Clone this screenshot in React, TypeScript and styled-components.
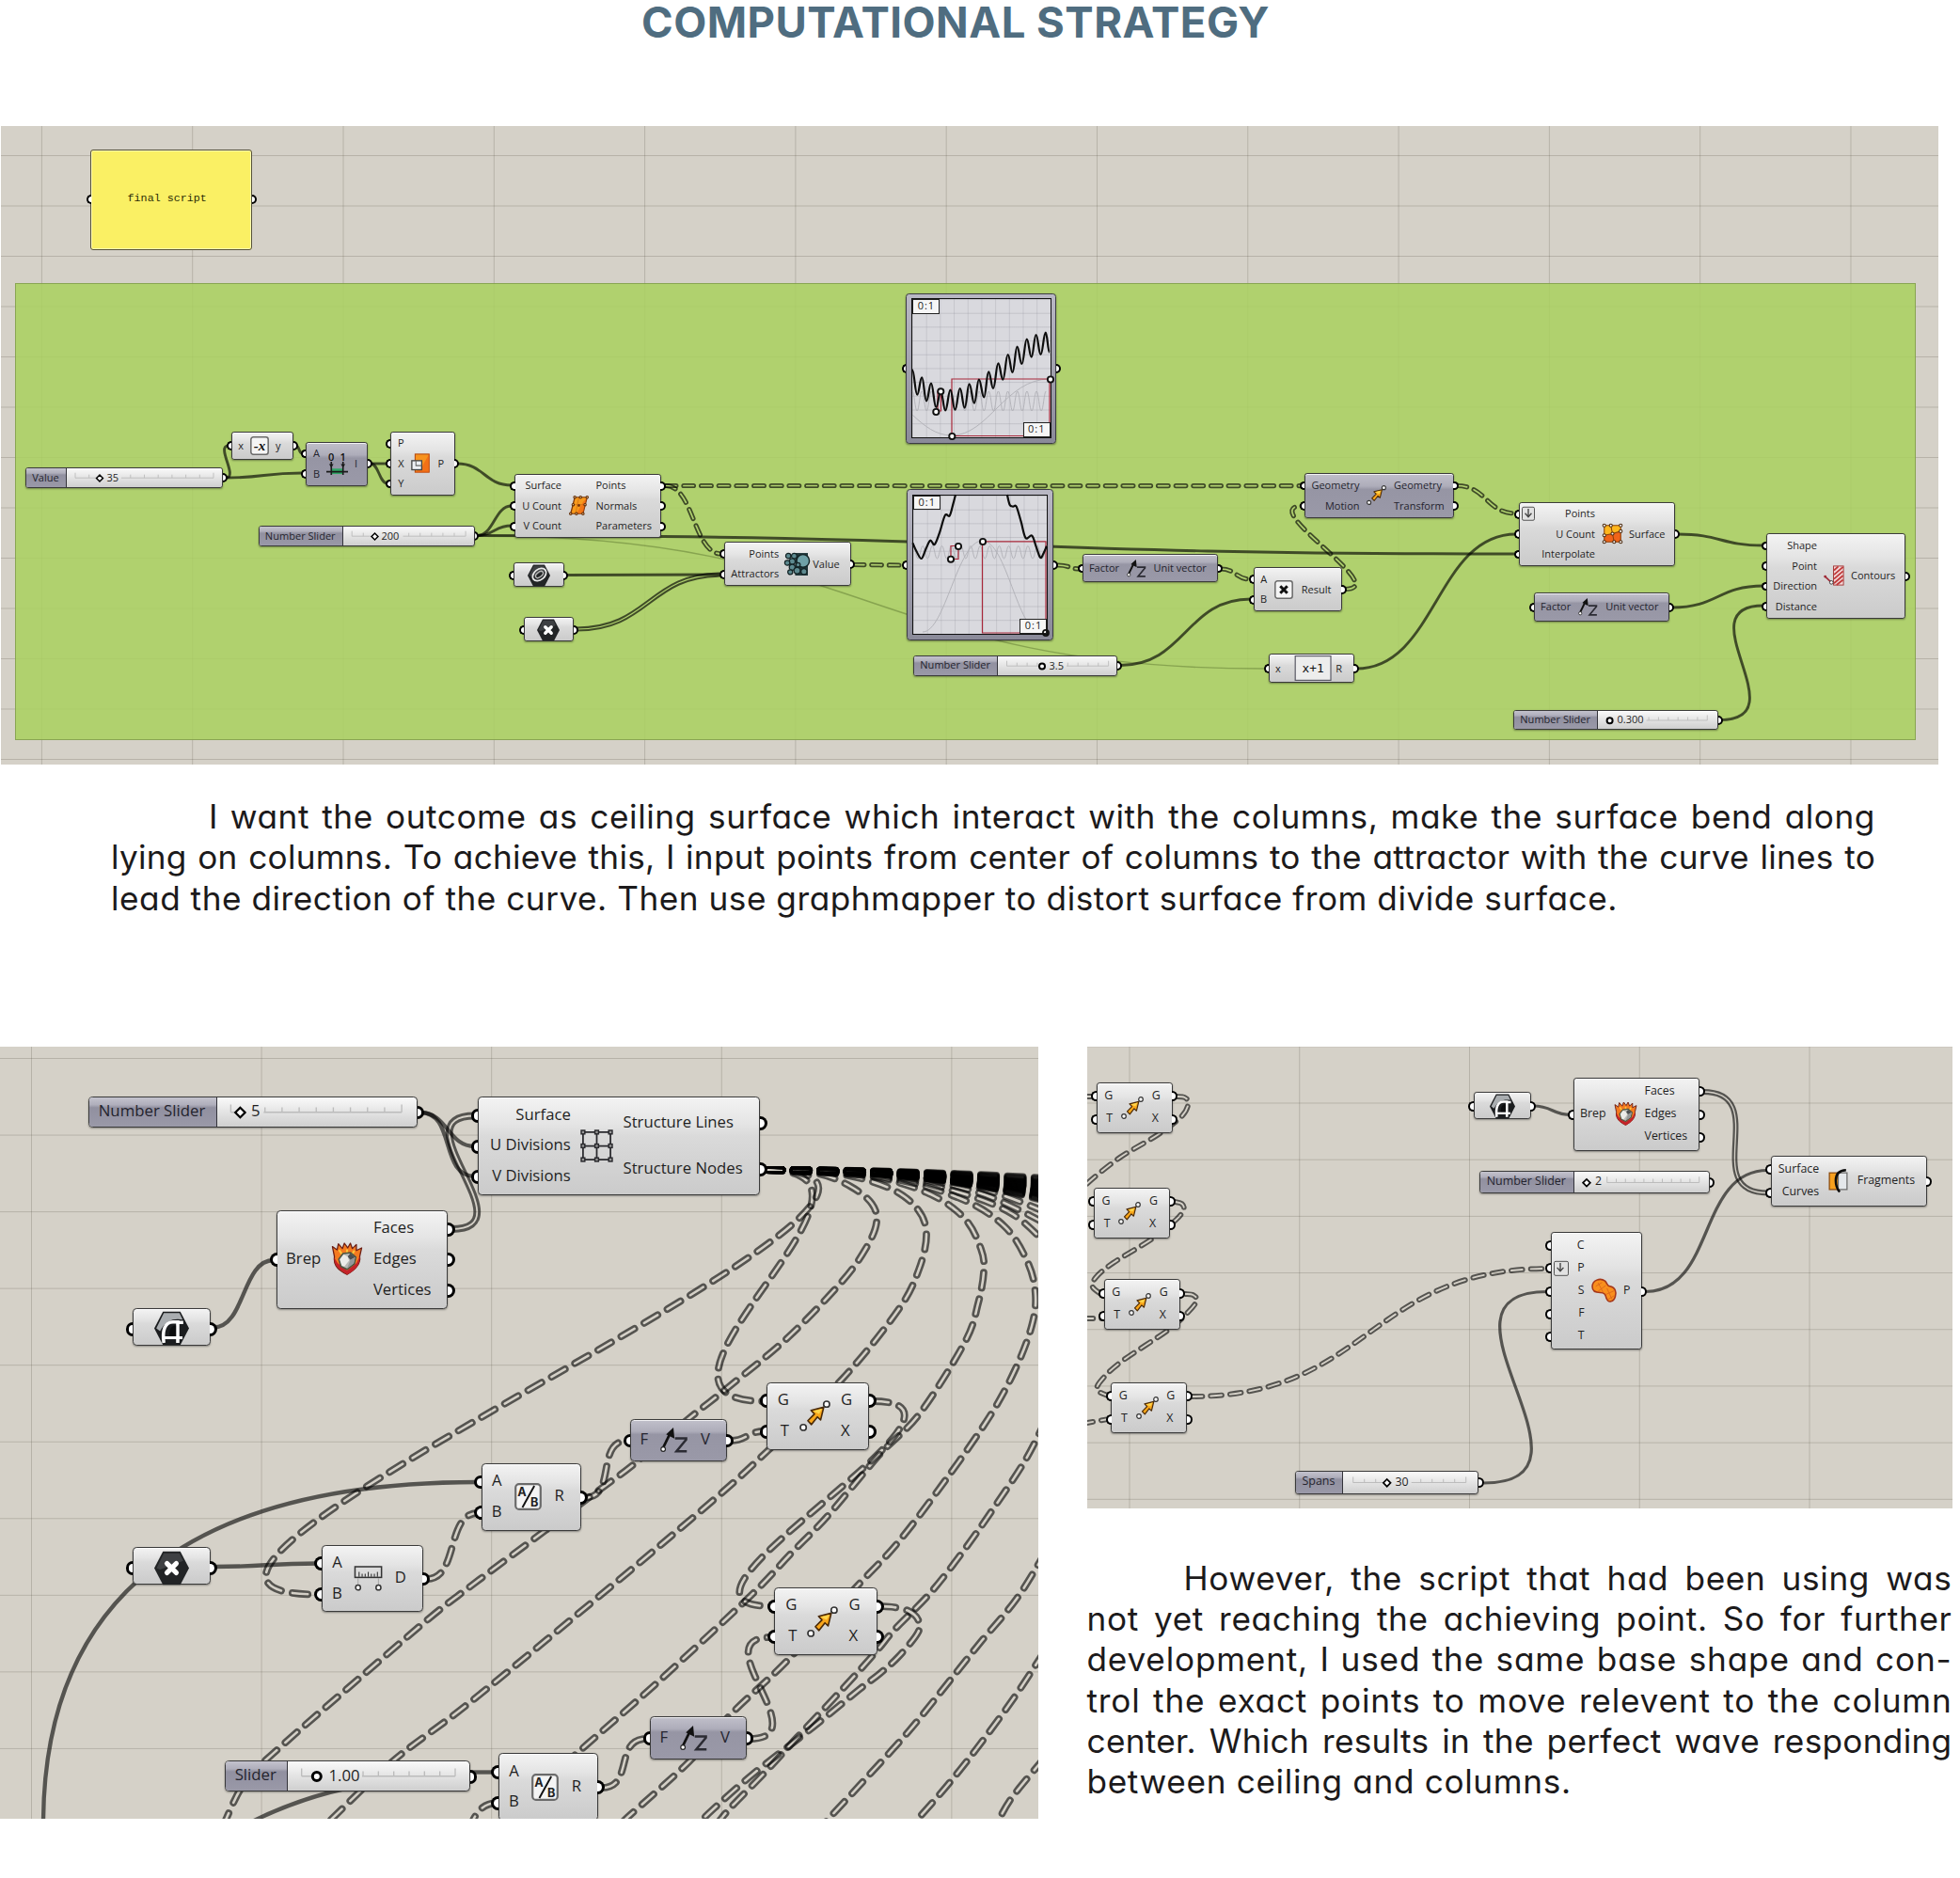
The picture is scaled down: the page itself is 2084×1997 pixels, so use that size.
import React from 'react';
import styled, { createGlobalStyle, ThemeProvider, css } from 'styled-components';

const UI = `'Open Sans', 'Noto Sans', sans-serif`;
const COPY = `Inter, 'Liberation Sans', sans-serif`;
const MONO = `'Liberation Mono', 'DejaVu Sans Mono', monospace`;

interface BoardTheme {
  s: number;
  x: number;
  y: number;
  w: number;
  h: number;
}

const Global = createGlobalStyle`
  *, *::before, *::after { box-sizing: border-box; }
  body { margin: 0; background: #fff; font-family: ${COPY}; }
`;

/* ---------- page ---------- */

const Page = styled.main`
  width: 2084px;
  height: 1997px;
  display: flex;
  flex-direction: column;
  background: #fff;
`;

const Title = styled.h1`
  margin: 0;
  height: 134px;
  padding-left: 682px;
  white-space: nowrap;
  font: 700 45.5px/48px ${COPY};
  letter-spacing: 0.47px;
  color: #4f6d80;
`;

const Copy = styled.div<{ $top: number; $left: number; $width: number }>`
  width: ${(p) => p.$width}px;
  margin: ${(p) => p.$top}px 0 0 ${(p) => p.$left}px;
  display: flex;
  flex-direction: column;
`;

const Line = styled.p<{ $indent?: number; $track?: number; $last?: boolean }>`
  margin: 0;
  padding-left: ${(p) => p.$indent ?? 0}px;
  height: 43.25px;
  font: 400 35.2px/43.25px ${COPY};
  font-feature-settings: 'cv11' 1;
  letter-spacing: ${(p) => p.$track ?? 0.5}px;
  text-align-last: ${(p) => (p.$last ? 'left' : 'justify')};
  color: #1c1a1b;
`;

const Plain = styled.span`
  font-feature-settings: normal;
  letter-spacing: 0;
`;

const Lower = styled.section`
  margin-top: 136px;
  display: flex;
  gap: 51.5px;
`;

const Side = styled.div`
  display: flex;
  flex-direction: column;
`;

/* ---------- board ---------- */

const BoardBox = styled.div<{ $vx: number; $vp: number; $hy: number; $hp: number }>`
  position: relative;
  flex: none;
  overflow: hidden;
  isolation: isolate;
  width: ${({ theme }) => (theme as BoardTheme).w}px;
  height: ${({ theme }) => (theme as BoardTheme).h}px;
  font-family: ${UI};
  background-color: #d5d1c8;
  background-image: linear-gradient(90deg, rgba(60, 55, 40, 0.2) 1.3px, transparent 1.3px),
    linear-gradient(180deg, rgba(60, 55, 40, 0.2) 1.3px, transparent 1.3px);
  background-size: ${(p) => p.$vp}px 100%, 100% ${(p) => p.$hp}px;
  background-position: ${(p) => p.$vx}px 0, 0 ${(p) => p.$hy}px;
`;

const Layer = styled.svg`
  position: absolute;
  inset: 0;
  width: 100%;
  height: 100%;
`;

const t = (p: { theme: unknown }) => p.theme as BoardTheme;

const placed = css<{ $x: number; $y: number; $w: number; $h: number }>`
  position: absolute;
  left: ${(p) => p.$x - t(p).x}px;
  top: ${(p) => p.$y - t(p).y}px;
  width: ${(p) => p.$w}px;
  height: ${(p) => p.$h}px;
`;

const Group = styled.div<{ $x: number; $y: number; $w: number; $h: number }>`
  ${placed}
  background: rgba(170, 208, 95, 0.86);
  border: 1.5px solid rgba(90, 110, 50, 0.45);
`;

const shell = css`
  border: ${(p) => Math.max(1.2, 1.15 * t(p).s)}px solid #3a3a3a;
  border-radius: ${(p) => 2.8 * t(p).s}px;
  box-shadow: 0 1px 2px rgba(0, 0, 0, 0.35), inset 0 1px 0 rgba(255, 255, 255, 0.8);
`;

const NodeBox = styled.div<{
  $x: number; $y: number; $w: number; $h: number; $dark?: boolean; $in: number; $mid: number;
}>`
  ${placed}
  display: grid;
  grid-template-columns: ${(p) => p.$in}px ${(p) => p.$mid}px 1fr;
  padding: ${(p) => 2.1 * t(p).s}px 0;

  &::before {
    content: '';
    position: absolute;
    inset: 0;
    z-index: 0;
    ${shell}
    background: ${(p) =>
      p.$dark
        ? 'linear-gradient(#c0bfca 0, #aeadba 28%, #9695a4 36%, #9a99a8 100%)'
        : 'linear-gradient(#f3f3f3 0, #e4e4e4 28%, #dadada 40%, #cbcbcb 100%)'};
  }
`;

const Col = styled.div`
  display: flex;
  flex-direction: column;
`;

const Row = styled.div`
  position: relative;
  flex: 1;
  display: flex;
  align-items: center;
`;

const Label = styled.span<{ $right?: boolean; $dark?: boolean }>`
  position: relative;
  width: 100%;
  top: ${(p) => -0.7 * t(p).s}px;
  text-align: ${(p) => (p.$right ? 'right' : 'left')};
  font-size: ${(p) => 11 * t(p).s}px;
  line-height: 1;
  white-space: nowrap;
  color: ${(p) => (p.$dark ? '#24242e' : '#1f1f1f')};
`;

const Port = styled.i<{ $out?: boolean }>`
  position: absolute;
  top: calc(50% - ${(p) => 4.6 * t(p).s}px);
  ${(p) => (p.$out ? 'right' : 'left')}: ${(p) => -4.9 * t(p).s}px;
  width: ${(p) => 5.2 * t(p).s}px;
  height: ${(p) => 9.8 * t(p).s}px;
  border: ${(p) => 2 * t(p).s}px solid #000;
  background: #fff;
  ${(p) =>
    p.$out
      ? `border-left: 0; border-radius: 0 ${6 * t(p).s}px ${6 * t(p).s}px 0;`
      : `border-right: 0; border-radius: ${6 * t(p).s}px 0 0 ${6 * t(p).s}px;`}
`;

const Mid = styled.div`
  position: relative;
  display: flex;
  align-items: center;
  justify-content: center;
`;

const Art = styled.svg<{ $size: number; $w?: number }>`
  flex: none;
  width: ${(p) => p.$w ?? p.$size}px;
  height: ${(p) => p.$size}px;
  overflow: visible;
`;

const Flatten = styled.span`
  position: absolute;
  left: ${(p) => 3 * t(p).s}px;
  top: 50%;
  transform: translateY(-50%);
  display: flex;
  width: ${(p) => 14.5 * t(p).s}px;
  height: ${(p) => 14.5 * t(p).s}px;
  border: 1.2px solid #555;
  border-radius: 2px;
  background: #e2e2e2;
`;

/* ---------- icons ---------- */

type IconName =
  | 'divide' | 'pull' | 'arrow' | 'vecz' | 'times' | 'expr' | 'surf' | 'contour' | 'neg' | 'interval'
  | 'rect' | 'grid' | 'brep' | 'ratio' | 'ruler' | 'split' | 'patch' | 'hexx' | 'hexcurve' | 'hexa';

const Hex = ({ children, size }: { children: React.ReactNode; size: number }) => (
  <Art viewBox="0 0 24 24" $size={size}>
    <path d="M6 .5H18L24 12 18 23.5H6L0 12Z" fill="#222426" />
    <path d="M6.6 1.8H17.4L20 7 4 13 1.6 12Z" fill="#4a4d50" opacity=".7" />
    {children}
  </Art>
);

const Button = ({ children, size }: { children: React.ReactNode; size: number }) => (
  <Art viewBox="0 0 24 24" $size={size}>
    <rect x="1" y="1" width="22" height="22" rx="3" fill="#f4f4f4" stroke="#6a6a6a" strokeWidth="1.8" />
    {children}
  </Art>
);

const Icon = ({ name, size }: { name: IconName; size: number }) => {
  switch (name) {
    case 'divide':
      return (
        <Art viewBox="0 0 24 24" $size={size}>
          <path d="M7 2H22L17 22H2Z" fill="#f79a1c" stroke="#7a3408" strokeWidth="1.4" />
          <path d="M17 8 22 2 17 22H9Z" fill="#ee5a12" opacity=".55" />
          <path d="M12 2 8 22M5 11H20" stroke="#b8560c" strokeWidth="1.1" opacity=".5" />
          <circle cx="12" cy="12" r="1.6" fill="#7a3408" />
          <g fill="#f6c88c" stroke="#5a2a0a" strokeWidth="1.2">
            {[[7, 2], [14, 2], [22, 2], [5, 11], [19.5, 11], [2, 22], [9, 22], [17, 22]].map(([x, y]) => (
              <circle key={`${x}-${y}`} cx={x} cy={y} r="1.4" />
            ))}
          </g>
        </Art>
      );
    case 'pull':
      return (
        <Art viewBox="0 0 24 24" $size={size}>
          <rect x="11" y="1" width="13" height="23" fill="#22383b" />
          <circle cx="19" cy="9" r="6.5" fill="#6fa0a6" stroke="#142426" strokeWidth="1.4" />
          <g fill="#5d8a90" stroke="#142426" strokeWidth="1.2">
            <circle cx="10" cy="4" r="2.8" /><circle cx="4" cy="4" r="2.6" /><circle cx="8" cy="9.5" r="3" />
            <circle cx="3" cy="11" r="2.6" /><circle cx="8" cy="15.5" r="3" /><circle cx="13" cy="19" r="3.2" />
            <circle cx="20" cy="20" r="3" /><circle cx="6" cy="20.5" r="2.5" /><circle cx="14" cy="13" r="2.2" />
          </g>
        </Art>
      );
    case 'arrow':
      return (
        <Art viewBox="0 0 24 24" $size={size}>
          <path d="M6.5 15.8 11.6 10.6 9 7.8 18.8 5.4 16.4 15.2 13.9 12.9 9.3 18.8Z" fill="#f9a61a" stroke="#4a2a08" strokeWidth="1.2" strokeLinejoin="round" />
          <path d="M10.5 8.4 17.5 6.6 15.2 10.5Z" fill="#ffd54a" />
          <circle cx="3" cy="21" r="2.3" fill="#fff" stroke="#333" strokeWidth="1.2" />
          <circle cx="21" cy="3" r="2.3" fill="#fff" stroke="#333" strokeWidth="1.2" />
        </Art>
      );
    case 'vecz':
      return (
        <Art viewBox="0 0 26 24" $size={size} $w={size * 1.08}>
          <path d="M2.8 19 9.6 5" stroke="#111" strokeWidth="2.4" />
          <path d="M12.5 0 13.5 10.5 5.6 6.4Z" fill="#111" />
          <circle cx="2.8" cy="20.5" r="2.1" fill="#fff" stroke="#222" strokeWidth="1" />
          <path d="M14 10.3H24.6V11.4L15.4 22.5H25.2" fill="none" stroke="#2b2b33" strokeWidth="2.2" />
        </Art>
      );
    case 'times':
      return (
        <Button size={size}>
          <path d="M7.5 7.5 16.5 16.5M16.5 7.5 7.5 16.5" stroke="#111" strokeWidth="3.6" />
        </Button>
      );
    case 'neg':
      return (
        <Button size={size}>
          <text x="12" y="17.5" textAnchor="middle" fontFamily="Liberation Serif, serif" fontSize="18" fontWeight="700" fontStyle="italic" fill="#111">-x</text>
        </Button>
      );
    case 'ratio':
      return (
        <Button size={size}>
          <path d="M17.5 2.5 7 21.5" stroke="#111" strokeWidth="1.6" />
          <text x="6.6" y="11.5" textAnchor="middle" fontFamily="Inter, sans-serif" fontSize="10.5" fontWeight="700" fill="#222">A</text>
          <text x="17.6" y="21" textAnchor="middle" fontFamily="Inter, sans-serif" fontSize="10.5" fontWeight="700" fill="#222">B</text>
        </Button>
      );
    case 'expr':
      return (
        <Art viewBox="-5.6 0 39 27" $size={27} $w={39}>
          <rect x=".6" y=".6" width="37.8" height="25.8" fill="#ededed" stroke="#5b5b66" strokeWidth="1.2" />
          <text x="19.5" y="17.5" textAnchor="middle" fontFamily="DejaVu Sans Mono, monospace" fontSize="12.8" fill="#111">x+1</text>
        </Art>
      );
    case 'surf':
      return (
        <Art viewBox="0 0 24 24" $size={size}>
          <path d="M2 2H22V10L12 13 2 16Z" fill="#fdb71e" />
          <path d="M2 14 12 12 22 9V22H2Z" fill="#f0641a" />
          <path d="M10 2 12 12 14 22M2 14 12 12 22 9M2 2H22V22H2Z" fill="none" stroke="#8a3f0a" strokeWidth="1.2" />
          <g fill="#fff" stroke="#4a2a10" strokeWidth="1.2">
            {[[2, 2], [10, 2], [22, 2], [2, 14], [12, 12], [22, 9], [2, 22], [14, 22], [22, 22]].map(([x, y]) => (
              <circle key={`${x}-${y}`} cx={x} cy={y} r="1.8" />
            ))}
          </g>
        </Art>
      );
    case 'contour':
      return (
        <Art viewBox="0 0 24 24" $size={size}>
          <rect x="11.5" y="1" width="11.5" height="22" fill="#f3d9d9" stroke="#a03030" strokeWidth="1" />
          <path d="M12 6 17 1.5M12 11 22.5 2M12 16 22.5 7M12 21 22.5 12M15 23 22.5 17" stroke="#c03a3a" strokeWidth="2" />
          <path d="M1.5 13 9 20" stroke="#a02c38" strokeWidth="1.8" />
          <circle cx="1.8" cy="13.2" r="1.6" fill="#a02c38" />
          <circle cx="9" cy="20" r="2" fill="#fff" stroke="#333" strokeWidth="1" />
        </Art>
      );
    case 'interval':
      return (
        <Art viewBox="0 0 24 24" $size={size}>
          <text x="5.5" y="8.5" textAnchor="middle" fontFamily="Open Sans, sans-serif" fontSize="11.5" fontWeight="600" fill="#111">0</text>
          <text x="18.5" y="8.5" textAnchor="middle" fontFamily="Open Sans, sans-serif" fontSize="11.5" fontWeight="600" fill="#111">1</text>
          <rect x="5.5" y="17" width="13" height="6" fill="#2fa565" />
          <path d="M0 20.5H24M5.5 9.5V24M18.5 9.5V24" stroke="#1a1a1a" strokeWidth="1.7" />
          <path d="M3 12H8L5.5 16ZM16 12H21L18.5 16Z" fill="#1a1a1a" />
        </Art>
      );
    case 'rect':
      return (
        <Art viewBox="0 0 24 24" $size={size}>
          <rect x="5" y="1" width="17" height="22" fill="#f7931e" stroke="#b5480c" strokeWidth="1.2" />
          <path d="M22 1V23H5L14 15Z" fill="#ee5a12" opacity=".6" />
          <rect x="1" y="9" width="12" height="11" fill="#eef0f4" stroke="#444" strokeWidth="1.5" />
          <path d="M6 9V15H13" fill="none" stroke="#666" strokeWidth="1.2" />
        </Art>
      );
    case 'grid':
      return (
        <Art viewBox="0 0 24 24" $size={size}>
          <path d="M2 2H22V22H2ZM12 2V22M2 12H22" fill="none" stroke="#2a2a2e" strokeWidth="1.2" />
          <g fill="#999" stroke="#2a2a2e" strokeWidth="1">
            {[2, 12, 22].flatMap((x) => [2, 12, 22].map((y) => (
              <rect key={`${x}-${y}`} x={x - 1.3} y={y - 1.3} width="2.6" height="2.6" />
            )))}
          </g>
        </Art>
      );
    case 'brep':
      return (
        <Art viewBox="0 0 24 24" $size={size}>
          <path d="M1 2.5 4.5 5 5.5 .5 8.5 4 10 0 12.5 3.5 14.5 0 16 4 19 1 19 5.5 23 3.5 21.5 10C22.5 16 18 20 12 23.5 6 20.5 1.5 17 2.5 10Z" fill="#f47a20" stroke="#6b1d14" strokeWidth=".9" strokeLinejoin="round" />
          <path d="M2.5 11C2 17 6.5 20.5 12 23.5 18 20.5 22 16 21.5 10L19 15 12 20.5 5 15Z" fill="#c4232a" />
          <path d="M6 5 8 8M12 4.5V7M17.5 5.5 16 8" stroke="#fbc43a" strokeWidth="1.5" />
          <path d="M5.8 12 9 7.8 14.5 7 18.6 10.5 17.5 15.5 12 19.6 7.5 17.5Z" fill="#b9bab6" stroke="#4e5540" strokeWidth="1.1" strokeLinejoin="round" />
          <path d="M12.500 10 14.5 7.6 18 10.600 14.500 12.500Z" fill="#4c4f52" />
          <path d="M14.500 12.500 18 10.600 17 15 12 19Z" fill="#94979a" />
          <path d="M6.6 12.2 9.4 8.4 12.5 10 13.500 13 10 17.5 8 16.8Z" fill="#f8f8f6" opacity=".8" />
        </Art>
      );
    case 'ruler':
      return (
        <Art viewBox="0 0 26 24" $size={size} $w={size * 1.12}>
          <rect x="0" y="0" width="26" height="10.5" fill="#dcdcdc" stroke="#333" strokeWidth="1.4" />
          <path d="M4 10V5M7 10V7M10 10V7M13 10V5M16 10V7M19 10V7M22 10V5" stroke="#333" strokeWidth="1" />
          <path d="M3 11V18M23 11V18" stroke="#aaa" strokeWidth="1" />
          <circle cx="3" cy="20.5" r="2.4" fill="#fff" stroke="#333" strokeWidth="1.4" />
          <circle cx="23" cy="20.5" r="2.4" fill="#fff" stroke="#333" strokeWidth="1.4" />
        </Art>
      );
    case 'split':
      return (
        <Art viewBox="0 0 20 24" $size={size}>
          <rect x="1" y="4" width="9" height="17" fill="#f7a01e" stroke="#8a4a0c" strokeWidth="1.2" />
          <rect x="10" y="4" width="9" height="17" fill="#e4e7ea" stroke="#6a6a6a" strokeWidth="1.2" />
          <path d="M18 1.2C9 1.5 7.5 7 7.5 12S8.5 20 11.5 23.5" fill="none" stroke="#0c0c0c" strokeWidth="2.4" />
        </Art>
      );
    case 'patch':
      return (
        <Art viewBox="0 0 26 24" $size={size} $w={size * 1.08}>
          <path d="M1 8C1 1 9-1.5 14 2 16.5 4.5 16 7 19 7.5 24.5 8.5 26 13 24.5 18 23 23.5 17.5 25 15.5 20 14.5 15.5 13.5 14 9 14 4 14 1 12 1 8Z" fill="#f98f1d" stroke="#a5371a" strokeWidth="1.5" />
          <path d="M4.5 7.5 11 3.5M7 12.5 15 6.5M14.5 16 23.5 12M17 21 23.5 17M7 4 12 13.5M16 9.5 21 20.5" stroke="#d9641a" strokeWidth=".8" />
        </Art>
      );
    case 'hexx':
      return (
        <Hex size={size}>
          <path d="M8.8 8.8 15.2 15.2M15.2 8.8 8.8 15.2" stroke="#fff" strokeWidth="3.4" strokeLinecap="round" />
        </Hex>
      );
    case 'hexcurve':
      return (
        <Hex size={size}>
          <ellipse cx="12.5" cy="11" rx="8" ry="5.6" transform="rotate(-38 12.5 11)" fill="none" stroke="#e8e8e8" strokeWidth="1.8" />
          <ellipse cx="12.5" cy="11" rx="4.6" ry="2.6" transform="rotate(-38 12.5 11)" fill="none" stroke="#b8b8b8" strokeWidth="1.4" />
        </Hex>
      );
    default:
      return (
        <Art viewBox="0 0 24 24" $size={size}>
          <path d="M6 .5H18L24 12 18 23.5H6L0 12Z" fill="#1b1d1f" />
          <path d="M6.6 1.5H17.4L19.6 6C14 5 8 6 4 14L1.4 12Z" fill="#a9adb0" />
          <path d="M6.6 22C5.5 14 7 7.6 13 7.6H16.2V22M16 8H20" fill="none" stroke="#fff" strokeWidth="2.3" />
          <path d="M10.5 16C10.5 11.5 12.5 10 15 10V17.5H10.8Z" fill="#0c0d0e" />
          <path d="M7 18.5H19.5" stroke="#fff" strokeWidth="2" />
        </Art>
      );
  }
};

/* ---------- nodes ---------- */

interface NodeProps {
  at: [number, number, number, number];
  cols: [number, number];
  ins?: string[];
  outs?: string[];
  icon: IconName;
  size?: number;
  dark?: boolean;
  flatten?: number;
}

const Node = ({ at, cols, ins = [], outs = [], icon, size = 22, dark, flatten }: NodeProps) => (
  <NodeBox $x={at[0]} $y={at[1]} $w={at[2]} $h={at[3]} $in={cols[0]} $mid={cols[1]} $dark={dark}>
    <Col>
      {ins.map((label, i) => (
        <Row key={i}>
          <Port />
          {flatten === i && (
            <Flatten>
              <Art viewBox="0 0 14 14" $size={12} $w={12}>
                <path d="M7 1.5V11M3 7 7 11.5 11 7" fill="none" stroke="#444" strokeWidth="1.6" />
              </Art>
            </Flatten>
          )}
          <Label $right $dark={dark}>{label}</Label>
        </Row>
      ))}
    </Col>
    <Mid><Icon name={icon} size={size} /></Mid>
    <Col>
      {outs.map((label, i) => (
        <Row key={i}>
          <Port $out />
          <Label $dark={dark}>{label}</Label>
        </Row>
      ))}
    </Col>
  </NodeBox>
);

const SliderBox = styled.div<{ $x: number; $y: number; $w: number; $h: number }>`
  ${placed}
`;

const SliderShell = styled.div`
  position: absolute;
  inset: 0;
  overflow: hidden;
  display: flex;
  ${shell}
  background: linear-gradient(#fafafa, #e6e6e6 45%, #cfcfcf);
`;

const SliderName = styled.div<{ $w: number }>`
  flex: none;
  width: ${(p) => p.$w}px;
  display: flex;
  align-items: center;
  justify-content: center;
  border-right: 1.3px solid #33333a;
  background: linear-gradient(#c3c2cd 0, #b0afbc 25%, #9190a0 35%, #9a99a8 100%);
  font-size: ${(p) => 11.05 * t(p).s}px;
  line-height: 1;
  padding: 0 ${(p) => 1 * t(p).s}px ${(p) => 1.4 * t(p).s}px 0;
  white-space: nowrap;
  color: #24242e;
`;

const SliderTrack = styled.div<{ $pad: number }>`
  position: relative;
  flex: 1;
  display: flex;
  align-items: center;
  padding-left: ${(p) => p.$pad}px;
  padding-bottom: ${(p) => 1.2 * t(p).s}px;
  font-size: ${(p) => 11 * t(p).s}px;
  line-height: 1;
  color: #1f1f1f;
`;

const Ticks = styled.svg`
  position: absolute;
  inset: 0;
  width: 100%;
  height: 100%;
`;

const Value = styled.span`
  position: relative;
`;

interface SliderProps {
  at: [number, number, number, number];
  name: string;
  split: number;
  knob: number;
  value: string;
  text: number;
  textEnd: number;
  ticks: [number, number];
  round?: boolean;
  k?: number;
}

const Slider = ({ at, name, split, knob, value, text, textEnd, ticks, round, k = 1 }: SliderProps) => {
  const [x, y, w, h] = at;
  const m = h / 2 - 0.8;
  const r = 3 * k;
  const xs = Array.from({ length: 11 }, (_, i) => ticks[0] + ((ticks[1] - ticks[0]) * i) / 10).filter(
    (v) => v < knob - r - 1 || v > textEnd + 1,
  );
  const o = split + 1;
  return (
    <SliderBox $x={x} $y={y} $w={w} $h={h}>
      <Port $out />
      <SliderShell>
        <SliderName $w={split - x}>{name}</SliderName>
        <SliderTrack $pad={text - o}>
          <Ticks>
            <g stroke="#bcbcbc" strokeWidth={k * 0.9}>
              {ticks[0] < knob - r - 1 && <path d={`M${ticks[0] - o} ${m}H${knob - r - 1 - o}`} />}
              <path d={`M${Math.max(textEnd + 2, ticks[0]) - o} ${m}H${ticks[1] - o}`} />
              {xs.map((v, i) => <path key={i} d={`M${v - o} ${m}v${-(v === ticks[0] || v === ticks[1] ? 5.5 : 3.5) * k}`} />)}
            </g>
            {round ? (
              <circle cx={knob - o} cy={m + 0.3} r={r} fill="#fff" stroke="#000" strokeWidth={2 * k} />
            ) : (
              <path d={`M${knob - o - r * 1.15} ${m + 0.3}l${r * 1.15}-${r * 1.15} ${r * 1.15} ${r * 1.15}-${r * 1.15} ${r * 1.15}Z`} fill="#fff" stroke="#000" strokeWidth={1.5 * k} />
            )}
          </Ticks>
          <Value>{value}</Value>
        </SliderTrack>
      </SliderShell>
    </SliderBox>
  );
};

const HexNode = ({ at, icon, size }: { at: [number, number, number, number]; icon: IconName; size: number }) => (
  <Node at={at} cols={[3, at[2] - 6]} ins={['']} outs={['']} icon={icon} size={size} />
);

/* ---------- wires ---------- */

type Pt = [number, number];
type Kind = 'solid' | 'double' | 'dash' | 'faint';
interface Wire { d: string; kind: Kind }

const link = (a: Pt, b: Pt, k?: number): string => {
  const c = k ?? Math.abs(b[0] - a[0]) / 2;
  return `M${a[0]} ${a[1]}C${a[0] + c} ${a[1]} ${b[0] - c} ${b[1]} ${b[0]} ${b[1]}`;
};

const through = (pts: Pt[]): string => {
  let d = `M${pts[0][0]} ${pts[0][1]}`;
  for (let i = 0; i < pts.length - 1; i++) {
    const p0 = pts[Math.max(0, i - 1)];
    const p1 = pts[i];
    const p2 = pts[i + 1];
    const p3 = pts[Math.min(pts.length - 1, i + 2)];
    d += `C${p1[0] + (p2[0] - p0[0]) / 6} ${p1[1] + (p2[1] - p0[1]) / 6} ${p2[0] - (p3[0] - p1[0]) / 6} ${p2[1] - (p3[1] - p1[1]) / 6} ${p2[0]} ${p2[1]}`;
  }
  return d;
};

const Wires = ({ id, wires, box, s, period, tone }: {
  id: string; wires: Wire[]; box: [number, number, number, number]; s: number; period: number; tone: string;
}) => {
  const outer = 5.2 * s;
  const inner = 1.7 * s;
  const dash = `${period * 0.85 - outer} ${period * 0.15 + outer}`;
  return (
    <Layer viewBox={box.join(' ')}>
      <defs>
        {wires.map((w, i) =>
          w.kind === 'dash' || w.kind === 'double' ? (
            <mask key={i} id={`${id}${i}`} maskUnits="userSpaceOnUse" x={box[0]} y={box[1]} width={box[2]} height={box[3]}>
              <rect x={box[0]} y={box[1]} width={box[2]} height={box[3]} fill="#fff" />
              <path d={w.d} fill="none" stroke="#000" strokeWidth={w.kind === 'dash' ? inner : 1.2 * s}
                strokeLinecap={w.kind === 'dash' ? 'round' : 'butt'} strokeDasharray={w.kind === 'dash' ? dash : undefined} />
            </mask>
          ) : null,
        )}
      </defs>
      {wires.map((w, i) => (
        <path key={i} d={w.d} fill="none" stroke={w.kind === 'faint' ? 'rgba(40,60,10,.3)' : tone}
          strokeWidth={w.kind === 'solid' ? 2.9 * s : w.kind === 'faint' ? 1.4 : w.kind === 'double' ? 5.2 * s : outer}
          strokeLinecap={w.kind === 'dash' ? 'round' : 'butt'}
          strokeDasharray={w.kind === 'dash' ? dash : undefined}
          mask={w.kind === 'dash' || w.kind === 'double' ? `url(#${id}${i})` : undefined} />
      ))}
    </Layer>
  );
};

/* ---------- graph mapper ---------- */

const GraphBox = styled.div<{ $x: number; $y: number; $w: number; $h: number }>`
  ${placed}
`;

const GraphFrame = styled.div`
  position: absolute;
  inset: 0;
  padding: 4.5px 4.5px 5px 5px;
  display: flex;
  border: 1.3px solid #3c3c44;
  border-radius: 3.5px;
  background: linear-gradient(#b9b8c4, #8a8a99);
  box-shadow: 0 1px 2px rgba(0, 0, 0, 0.4);
`;

const Plot = styled.div`
  position: relative;
  flex: 1;
  border: 1.5px solid #111;
  background-color: #d9d9de;
  background-image: linear-gradient(90deg, rgba(140, 140, 150, 0.25) 1px, transparent 1px),
    linear-gradient(rgba(140, 140, 150, 0.3) 1px, transparent 1px);
  background-size: 14.7px 100%, 100% 14.7px;
`;

const Range = styled.span<{ $end?: boolean }>`
  position: absolute;
  ${(p) => (p.$end ? 'right: 0; bottom: 0;' : 'left: 0; top: 0;')}
  width: 29px;
  height: 15.5px;
  border: 1px solid #222;
  background: #f6f6f6;
  font: 11px/12px ${UI};
  text-align: center;
  letter-spacing: 1px;
  color: #222;
`;

const GraphArt = styled.svg`
  position: absolute;
  left: -1.5px;
  top: -1.5px;
  width: 148px;
  height: 148px;
  overflow: visible;
`;

const waves = (pts: Pt[]): string =>
  pts.reduce((d, p, i) => {
    if (i === 0) return `M${p[0]} ${p[1]}`;
    const q = pts[i - 1];
    const h = (p[0] - q[0]) * 0.42;
    return `${d}C${q[0] + h} ${q[1]} ${p[0] - h} ${p[1]} ${p[0]} ${p[1]}`;
  }, '');

const main1: Pt[] = (
  [[1054, 280], [1066, 360], [1077, 305], [1088, 380], [1099, 324], [1111, 400], [1122, 350], [1133, 410], [1145, 345],
  [1156, 408], [1168, 340], [1179, 402], [1190, 326], [1202, 387], [1213, 312], [1225, 368], [1236, 287], [1247, 340],
  [1259, 260], [1270, 312], [1282, 232], [1293, 289], [1304, 207], [1315, 262], [1327, 183], [1338, 240], [1349, 169],
  [1360, 232], [1372, 162], [1381, 225]] as Pt[]
).map(([x, y]) => [(x - 1052) / 2.24, (y - 52) / 3]);

const ghost = (y0: number, y1: number): Pt[] =>
  Array.from({ length: 29 }, (_, i) => [1 + i * 5.08, i % 2 ? y1 : y0]);

const conv2 = (pts: Pt[]): Pt[] => pts.map(([x, y]) => [(x - 1054) / 2.24, (y - 681) / 3]);

const left2 = through(conv2([[1055, 838], [1064, 865], [1076, 888], [1087, 855], [1097, 830], [1107, 843], [1119, 805], [1132, 750], [1143, 751], [1151, 715], [1157, 684]]));
const right2 = through(conv2([[1280, 684], [1286, 716], [1294, 722], [1302, 722], [1313, 770], [1324, 822], [1339, 815], [1349, 850], [1359, 885], [1367, 870], [1374, 848]]));

const Knobs = ({ pts }: { pts: Pt[] }) => (
  <g fill="#fff" stroke="#111" strokeWidth="1.9">
    {pts.map(([x, y]) => <circle key={`${x}-${y}`} cx={x} cy={y} r="3.1" />)}
  </g>
);

const GraphOne = () => (
  <GraphBox $x={963.4} $y={311.7} $w={159.8} $h={160}>
    <Port /><Port $out />
    <GraphFrame>
      <Plot>
        <GraphArt viewBox="0 0 148 148">
          <path d={waves(ghost(99, 120))} fill="none" stroke="#b4b4ba" strokeWidth="1" />
          <path d="M1 124C14 136 26 146 43 146 82 146 100 86 147 86" fill="none" stroke="#b4b4ba" strokeWidth="1" />
          <path d="M43 146V86H147V146.5H43M28 99V120H31.5V99Z" fill="none" stroke="#a8283a" strokeWidth="1.2" />
          <path d={waves(main1)} fill="none" stroke="#0d0d0d" strokeWidth="2.2" />
        </GraphArt>
        <Range>0:1</Range>
        <Range $end>0:1</Range>
        <GraphArt viewBox="0 0 148 148">
          <Knobs pts={[[31.3, 99.3], [26.3, 121], [43.3, 147], [148, 86.5]]} />
        </GraphArt>
      </Plot>
    </GraphFrame>
  </GraphBox>
);

const GraphTwo = () => (
  <GraphBox $x={964.3} $y={520.3} $w={155.7} $h={160.7}>
    <Port /><Port $out />
    <GraphFrame>
      <Plot>
        <GraphArt viewBox="0 0 148 148">
          <path d={waves(ghost(55.5, 69))} fill="none" stroke="#b4b4ba" strokeWidth="1" />
          <path d="M11 147C35 147 48 50 74.5 50 100 50 112 147 136 147" fill="none" stroke="#b4b4ba" strokeWidth="1" />
          <path d="M74.5 50.8H142V148H74.5ZM41 55.5V69.5H49V55.5Z" fill="none" stroke="#a8283a" strokeWidth="1.2" />
          <path d={left2} fill="none" stroke="#0d0d0d" strokeWidth="2.2" />
          <path d={right2} fill="none" stroke="#0d0d0d" strokeWidth="2.2" />
        </GraphArt>
        <Range>0:1</Range>
        <Range $end>0:1</Range>
        <GraphArt viewBox="0 0 148 148">
          <Knobs pts={[[75, 51], [49, 56], [41, 69.7]]} />
          <circle cx="142" cy="148" r="3.1" fill="none" stroke="#111" strokeWidth="1.7" />
        </GraphArt>
      </Plot>
    </GraphFrame>
  </GraphBox>
);

const Panel = styled.div<{ $x: number; $y: number; $w: number; $h: number }>`
  ${placed}
  display: flex;
  align-items: center;
  justify-content: center;
  padding: 0 9px 0 0;

  &::before {
    content: '';
    position: absolute;
    inset: 0;
    border: 1.5px solid #57533a;
    border-radius: 3px;
    background: #faf064;
    box-shadow: inset 0 0 0 1px #fffab0;
  }
`;

const PanelText = styled.span`
  position: relative;
  font: 11.7px/1 ${MONO};
  color: #2c2c04;
`;

/* ---------- boards ---------- */

const top: BoardTheme = { s: 1, x: 1, y: 134, w: 2060, h: 679 };
const left: BoardTheme = { s: 1.52, x: 0, y: 1113, w: 1104, h: 821 };
const right: BoardTheme = { s: 1.127, x: 1155.5, y: 1113, w: 920.5, h: 491 };

const boxOf = (b: BoardTheme): [number, number, number, number] => [b.x, b.y, b.w, b.h];

const topWires: Wire[] = [
  { kind: 'faint', d: link([507, 569.5], [1344, 711]) },
  { kind: 'solid', d: link([240, 508], [243, 474], 14) },
  { kind: 'solid', d: link([240, 508], [321, 503]) },
  { kind: 'solid', d: link([315, 474], [321, 482]) },
  { kind: 'solid', d: link([394, 493], [412, 493]) },
  { kind: 'solid', d: link([394, 493], [412, 514], 9) },
  { kind: 'solid', d: link([486, 493], [544, 516]) },
  { kind: 'solid', d: link([507, 569.5], [544, 538]) },
  { kind: 'solid', d: link([507, 569.5], [544, 559]) },
  { kind: 'solid', d: link([507, 569.5], [1612, 589]) },
  { kind: 'dash', d: link([708, 516.5], [1385, 516.6]) },
  { kind: 'dash', d: link([708, 516.5], [767, 589]) },
  { kind: 'solid', d: link([602, 611.5], [767, 611]) },
  { kind: 'double', d: link([613, 669], [767, 611]) },
  { kind: 'dash', d: link([908, 600.5], [962, 601]) },
  { kind: 'dash', d: link([1125, 601], [1149, 605]) },
  { kind: 'dash', d: link([1298, 605], [1330, 616]) },
  { kind: 'dash', d: link([1430, 626.5], [1385, 538], 52) },
  { kind: 'solid', d: link([1191, 707.5], [1330, 637]) },
  { kind: 'solid', d: link([1442, 711], [1612, 568]) },
  { kind: 'dash', d: link([1549, 516.5], [1612, 546]) },
  { kind: 'solid', d: link([1784, 568], [1875, 580]) },
  { kind: 'solid', d: link([1778, 646], [1875, 623]) },
  { kind: 'solid', d: link([1829, 765.5], [1875, 644], 85) },
];

const N: Pt = [815, 1244];

const fan: Wire[] = Array.from({ length: 20 }, (_, i) => ({
  kind: 'dash' as Kind,
  d: `M815 1244Q${965 + i * 2} 1244 1125 ${1253.5 + i * 1.45}`,
}));

const leftWires: Wire[] = [
  { kind: 'solid', d: link([447, 1183], [505, 1219]) },
  { kind: 'solid', d: link([447, 1183], [505, 1251], 38) },
  { kind: 'double', d: link([480, 1307], [505, 1186.5], 83) },
  { kind: 'solid', d: link([227, 1411.5], [291, 1340], 34) },
  { kind: 'solid', d: 'M46 1940C46 1700 200 1576 508 1576' },
  { kind: 'solid', d: 'M266 1938Q330 1906 400 1896' },
  { kind: 'solid', d: 'M500 1884.5H527' },
  { kind: 'solid', d: link([227, 1666], [338, 1662.5]) },
  { kind: 'dash', d: link([454, 1679], [508, 1609], 34) },
  { kind: 'dash', d: link([622, 1592.5], [667, 1532], 34) },
  { kind: 'dash', d: link([777, 1532], [812, 1522]) },
  ...fan,
  { kind: 'dash', d: link(N, [338, 1695.5], 308) },
  { kind: 'dash', d: link(N, [812, 1490], 170) },
  { kind: 'dash', d: through([N, [870, 1248], [905, 1262], [927, 1280], [932, 1300], [921, 1327], [895, 1363], [838, 1422], [777, 1473], [733, 1508], [674, 1557], [650, 1575], [620, 1597], [579, 1628], [500, 1687], [455, 1722], [370, 1795], [300, 1856], [262, 1893], [241, 1933], [236, 1950]]) },
  { kind: 'dash', d: through([N, [890, 1248], [945, 1263], [975, 1285], [985, 1312], [977, 1350], [955, 1393], [895, 1467], [816, 1543], [761, 1593], [646, 1690], [500, 1810], [421, 1870], [356, 1931], [346, 1942]]) },
  { kind: 'dash', d: through([N, [920, 1250], [985, 1268], [1025, 1295], [1043, 1328], [1046, 1352], [1040, 1386], [1026, 1427], [978, 1503], [935, 1547], [880, 1612], [840, 1653], [798, 1697], [698, 1790], [615, 1863], [540, 1930]]) },
  { kind: 'dash', d: through([N, [940, 1252], [1020, 1274], [1068, 1304], [1093, 1343], [1101, 1377], [1097, 1410], [1080, 1455], [1053, 1505], [1006, 1573], [955, 1640], [911, 1687], [836, 1767], [777, 1823], [733, 1873], [670, 1930], [660, 1940]]) },
  { kind: 'dash', d: through([N, [940, 1250], [1020, 1268], [1075, 1290], [1110, 1320]]) },
  { kind: 'dash', d: through([N, [940, 1249], [1040, 1268], [1125, 1308]]) },
  { kind: 'dash', d: through([N, [940, 1248], [1040, 1263], [1125, 1294]]) },
  { kind: 'dash', d: through([[1112, 1510], [1090, 1553], [1057, 1603], [1026, 1647], [990, 1693], [951, 1733], [931, 1757], [895, 1797], [848, 1847], [816, 1882], [777, 1922], [762, 1940]]) },
  { kind: 'dash', d: link([928, 1490], [820, 1708], 150) },
  { kind: 'dash', d: through([[936, 1708], [950, 1709], [966, 1713], [976, 1722], [976, 1736], [955, 1762], [935, 1780], [913, 1797], [864, 1837], [800, 1887], [757, 1925], [742, 1940]]) },
  { kind: 'dash', d: link([797, 1849], [820, 1741], 74) },
  { kind: 'dash', d: through([[1112, 1650], [1081, 1700], [1042, 1747], [1010, 1787], [967, 1840], [919, 1893], [882, 1933], [875, 1942]]) },
  { kind: 'dash', d: through([[1110, 1757], [1077, 1807], [1038, 1860], [1006, 1900], [977, 1933], [970, 1942]]) },
  { kind: 'dash', d: through([[1110, 1870], [1077, 1910], [1063, 1933], [1058, 1942]]) },
  { kind: 'dash', d: link([640, 1901], [687, 1849], 34) },
  { kind: 'dash', d: 'M528 1917C512 1918 506 1928 500 1942' },
];

const rightWires: Wire[] = [
  { kind: 'solid', d: link([1630, 1176], [1670, 1185.5]) },
  { kind: 'double', d: link([1810, 1161], [1879, 1268.5], 75) },
  { kind: 'solid', d: link([1749, 1373.5], [1879, 1244.5], 75) },
  { kind: 'dash', d: link([1266, 1485], [1645, 1349]) },
  { kind: 'solid', d: link([1577, 1577], [1645, 1373.5], 142) },
  { kind: 'dash', d: through([[1250, 1166], [1259, 1167], [1263, 1173], [1256, 1187], [1230, 1207], [1190, 1231], [1156, 1258], [1148, 1268]]) },
  { kind: 'dash', d: through([[1249, 1278], [1256, 1280], [1258, 1286], [1250, 1297], [1225, 1317], [1183, 1343], [1165, 1358], [1161, 1368], [1170, 1376]]) },
  { kind: 'dash', d: through([[1260, 1376], [1268, 1377], [1272, 1383], [1263, 1395], [1242, 1414], [1193, 1447], [1172, 1466], [1166, 1478], [1180, 1485]]) },
  { kind: 'dash', d: 'M1150 1402H1172' },
  { kind: 'dash', d: 'M1150 1514 1178 1509' },
  { kind: 'dash', d: 'M1148 1166H1164' },
];

const moves: [number, number][] = [[1165.7, 1151.3], [1163, 1263.3], [1173.7, 1360.7], [1181.3, 1470.3]];

const TopBoard = () => (
  <ThemeProvider theme={top}>
    <BoardBox $vx={43 - 160.4} $vp={160.3} $hy={31 - 53.5} $hp={53.5}>
      <Group $x={16} $y={300.5} $w={2021} $h={486.7} />
      <Wires id="t" wires={topWires} box={boxOf(top)} s={1} period={18.7} tone="rgba(0,0,0,.64)" />
      <Panel $x={96.4} $y={158.5} $w={171.6} $h={107}>
        <Port /><Port $out />
        <PanelText>final script</PanelText>
      </Panel>
      <Slider at={[27, 497, 210, 22]} name="Value" split={70} knob={106} value="35" text={113.5} textEnd={127} ticks={[80, 227]} />
      <Node at={[246, 459, 66, 30]} cols={[13, 34]} ins={['x']} outs={['y']} icon="neg" size={20} />
      <Node at={[325, 469.5, 66, 47]} cols={[15, 37]} ins={['A', 'B']} outs={['I']} icon="interval" size={23} dark />
      <Node at={[415, 458.5, 68.5, 68.5]} cols={[14.5, 36]} ins={['P', 'X', 'Y']} outs={['P']} icon="rect" size={21} />
      <Slider at={[275, 559, 229.5, 22]} name="Number Slider" split={363.5} knob={398} value="200" text={405.5} textEnd={426} ticks={[373.7, 494.6]} />
      <Node at={[547.3, 503.7, 155.4, 68.6]} cols={[49.7, 36.5]} ins={['Surface', 'U Count', 'V Count']} outs={['Points', 'Normals', 'Parameters']} icon="divide" size={21} />
      <HexNode at={[546, 598, 53.6, 26]} icon="hexcurve" size={24} />
      <HexNode at={[556.5, 656, 53.6, 26]} icon="hexx" size={24} />
      <Node at={[769.6, 576.3, 135, 47]} cols={[58.7, 36]} ins={['Points', 'Attractors']} outs={['Value']} icon="pull" size={25} />
      <GraphOne />
      <GraphTwo />
      <Slider at={[971.4, 696.7, 217, 22]} name="Number Slider" split={1060} knob={1108} value="3.5" text={1115.5} textEnd={1132} ticks={[1070.5, 1178.6]} round />
      <Node at={[1151, 589.3, 144, 30]} cols={[39, 36.5]} ins={['Factor']} outs={['Unit vector']} icon="vecz" size={19} dark />
      <Node at={[1332.7, 603.3, 94, 47]} cols={[14.5, 36.5]} ins={['A', 'B']} outs={['Result']} icon="times" size={20} />
      <Node at={[1387, 503.3, 158.7, 47.4]} cols={[58.5, 36.5]} ins={['Geometry', 'Motion']} outs={['Geometry', 'Transform']} icon="arrow" size={21} dark />
      <Node at={[1348.7, 695.3, 91, 30.4]} cols={[13, 58.5]} ins={['x']} outs={['R']} icon="expr" />
      <Node at={[1614.5, 533.7, 166.8, 68.3]} cols={[81.5, 36]} ins={['Points', 'U Count', 'Interpolate']} outs={['Surface']} icon="surf" size={21} flatten={0} />
      <Node at={[1631.2, 630.3, 144, 30.4]} cols={[39, 37]} ins={['Factor']} outs={['Unit vector']} icon="vecz" size={19} dark />
      <Node at={[1877.5, 567.3, 148.8, 90.4]} cols={[54.5, 36]} ins={['Shape', 'Point', 'Direction', 'Distance']} outs={['Contours']} icon="contour" size={22} />
      <Slider at={[1609, 754.7, 217.7, 21.6]} name="Number Slider" split={1698.4} knob={1712} value="0.300" text={1719.5} textEnd={1749} ticks={[1712, 1815.7]} round />
    </BoardBox>
  </ThemeProvider>
);

const LeftBoard = () => (
  <ThemeProvider theme={left}>
    <BoardBox $vx={33 - 244.6} $vp={244.6} $hy={12 - 81.55} $hp={81.55}>
      <Wires id="l" wires={leftWires} box={boxOf(left)} s={1.5} period={28.5} tone="rgba(0,0,0,.6)" />
      <Slider at={[94, 1166.3, 349.5, 33]} name="Number Slider" split={229.6} knob={255} value="5" text={267} textEnd={278} ticks={[245, 426.7]} k={1.5} />
      <Node at={[508, 1166.7, 300.4, 104.5]} cols={[98.8, 55.7]} ins={['Surface', 'U Divisions', 'V Divisions']} outs={['Structure Lines', 'Structure Nodes']} icon="grid" size={35} />
      <Node at={[294.3, 1287.3, 182.2, 104.7]} cols={[47, 55.6]} ins={['Brep']} outs={['Faces', 'Edges', 'Vertices']} icon="brep" size={34} />
      <HexNode at={[141, 1391.3, 82.5, 40]} icon="hexa" size={37} />
      <Node at={[815, 1470, 109.3, 72]} cols={[24, 55]} ins={['G', 'T']} outs={['G', 'X']} icon="arrow" size={33} />
      <Node at={[670, 1509, 102.8, 45.7]} cols={[19, 56]} ins={['F']} outs={['V']} icon="vecz" size={27} dark />
      <Node at={[511.5, 1556.3, 106, 71.7]} cols={[22, 56]} ins={['A', 'B']} outs={['R']} icon="ratio" size={29} />
      <Node at={[341.8, 1643, 108, 71.7]} cols={[22, 56]} ins={['A', 'B']} outs={['D']} icon="ruler" size={26} />
      <HexNode at={[141, 1645.7, 82.5, 40]} icon="hexx" size={37} />
      <Node at={[823.4, 1688.3, 109.3, 72]} cols={[24, 55]} ins={['G', 'T']} outs={['G', 'X']} icon="arrow" size={33} />
      <Node at={[691, 1825.3, 103, 46]} cols={[19, 56]} ins={['F']} outs={['V']} icon="vecz" size={27} dark />
      <Node at={[529.7, 1864.7, 106, 71.7]} cols={[22, 56]} ins={['A', 'B']} outs={['R']} icon="ratio" size={29} />
      <Slider at={[239, 1872.7, 261, 33]} name="Slider" split={305} knob={336.8} value="1.00" text={349.5} textEnd={383} ticks={[320.7, 484]} round k={1.5} />
    </BoardBox>
  </ThemeProvider>
);

const RightBoard = () => (
  <ThemeProvider theme={right}>
    <BoardBox $vx={44.5 - 180.75} $vp={180.75} $hy={59.5 - 60.2} $hp={60.2}>
      <Wires id="r" wires={rightWires} box={boxOf(right)} s={1.12} period={20.7} tone="rgba(0,0,0,.6)" />
      {moves.map(([x, y]) => (
        <Node key={y} at={[x, y, 81, 53.5]} cols={[17.5, 41.5]} ins={['G', 'T']} outs={['G', 'X']} icon="arrow" size={24} />
      ))}
      <HexNode at={[1566.7, 1161, 61, 29.5]} icon="hexa" size={27} />
      <Node at={[1673, 1146.3, 134, 77.7]} cols={[34.5, 41]} ins={['Brep']} outs={['Faces', 'Edges', 'Vertices']} icon="brep" size={25} />
      <Slider at={[1572.7, 1245.3, 245, 24.4]} name="Number Slider" split={1673} knob={1687} value="2" text={1696} textEnd={1706} ticks={[1708.7, 1806.7]} k={1.12} />
      <Node at={[1882.5, 1229.3, 166, 53.7]} cols={[51.7, 40.6]} ins={['Surface', 'Curves']} outs={['Fragments']} icon="split" size={25} />
      <Node at={[1648.6, 1310.3, 97, 125.4]} cols={[36, 41.5]} ins={['C', 'P', 'S', 'F', 'T']} outs={['P']} icon="patch" size={25} flatten={1} />
      <Slider at={[1376.7, 1564.3, 195.3, 24.7]} name="Spans" split={1427.3} knob={1475} value="30" text={1483.5} textEnd={1499} ticks={[1439, 1559]} k={1.12} />
    </BoardBox>
  </ThemeProvider>
);

const Offset = styled.div`
  padding-left: 1px;
`;

export default function App() {
  return (
    <>
      <Global />
      <Page>
        <Title>COMPUTATIONAL STRATEGY</Title>
        <Offset><TopBoard /></Offset>
        <Copy $top={34} $left={118} $width={1876}>
          <Line $indent={104} $track={0.55}><Plain>I</Plain> want the outcome as ceiling surface which interact with the columns, make the surface bend along</Line>
          <Line $track={0.25}>lying on columns. To achieve this, <Plain>I</Plain> input points from center of columns to the attractor with the curve lines to</Line>
          <Line $last $track={0.52}>lead the direction of the curve. Then use graphmapper to distort surface from divide surface.</Line>
        </Copy>
        <Lower>
          <LeftBoard />
          <Side>
            <RightBoard />
            <Copy $top={53} $left={0} $width={920}>
              <Line $indent={103} $track={0.65}>However, the script that had been using was</Line>
              <Line $track={0.65}>not yet reaching the achieving point. So for further</Line>
              <Line $track={0.8}>development, <Plain>I</Plain> used the same base shape and con-</Line>
              <Line $track={0.8}>trol the exact points to move relevent to the column</Line>
              <Line $track={0.3}>center. Which results in the perfect wave responding</Line>
              <Line $last $track={0.65}>between ceiling and columns.</Line>
            </Copy>
          </Side>
        </Lower>
      </Page>
    </>
  );
}
